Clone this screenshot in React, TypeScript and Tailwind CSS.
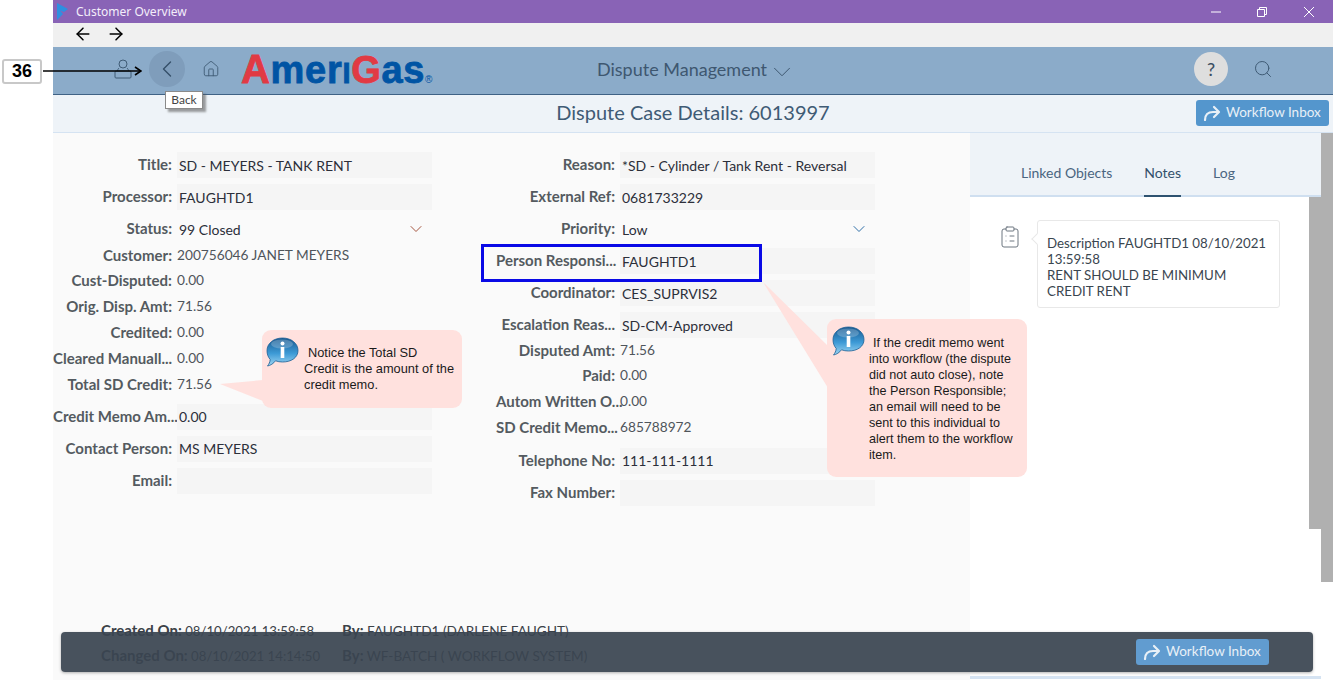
import React from "react";
import { ArrowLeft, ArrowRight, ChevronDown, ChevronLeft, House, Search, ClipboardList } from "lucide-react";

const font = "font-['Lato',sans-serif]";

function Info({ className }: { className: string }) {
  return (
    <svg viewBox="0 0 33 30" className={className}>
      <defs>
        <linearGradient id="ig" x1="0" y1="0" x2="0" y2="1">
          <stop offset="0" stopColor="#17588f" />
          <stop offset="0.55" stopColor="#3d9ad6" />
          <stop offset="1" stopColor="#9fd6f2" />
        </linearGradient>
      </defs>
      <path d="M16.5 1C25.5 1 32 6.5 32 13.5S25.5 25 16.5 25c-2.5 0-5-.4-7-1.2C7.5 26.5 4.5 28.5 1.500 29c1.500-1.800 2.500-4 2.700-6.500C2 20 1 17 1 13.500 1 6.500 7.500 1 16.500 1Z" fill="url(#ig)" stroke="#1d5f94" strokeWidth="0.8" />
      <ellipse cx="16" cy="7" rx="11" ry="4.500" fill="#fff" opacity="0.22" />
      <circle cx="16.500" cy="6.500" r="2" fill="#fff" />
      <rect x="14.700" y="10" width="3.600" height="11" fill="#fff" />
    </svg>
  );
}

function Flow() {
  return (
    <svg viewBox="0 0 18 16" className="h-4 w-[18px] shrink-0" fill="none" stroke="currentColor" strokeWidth="2.200" strokeLinecap="round" strokeLinejoin="round">
      <path d="M2 15c0-5 3-8 8-8h5" />
      <path d="M11 2l5 5-5 5" />
    </svg>
  );
}

function Button({ className }: { className: string }) {
  return (
    <div className={`flex h-[26px] w-[133px] items-center gap-[5px] whitespace-nowrap rounded-[3px] pl-[7px] text-[13.500px] text-[#e8f0f7] ${className}`}>
      <Flow />
      <span className="mb-[2px]">Workflow Inbox</span>
    </div>
  );
}

function Label({ text }: { text: string }) {
  return <span className="mb-[2px] w-[119px] shrink-0 whitespace-nowrap text-right text-[15px] font-bold text-[#545a60]">{text}</span>;
}

function FieldRow({ label, value, chevron, blue }: { label: string; value?: string; chevron?: boolean; blue?: boolean }) {
  return (
    <div className="flex h-8 items-center gap-[5px]">
      <Label text={label} />
      <div className={`flex h-[26px] w-[255px] items-center justify-between px-[2px] text-[14px] text-[#2c2f3a] ${chevron ? "bg-transparent" : "bg-[#f5f5f5]"}`}>
        <span className="whitespace-nowrap">{value}</span>
        {chevron && <ChevronDown className={`mr-1 h-5 w-5 ${blue ? "text-[#2f6fa8]" : "text-[#a5553f]"}`} strokeWidth={1.200} />}
      </div>
    </div>
  );
}

function TextRow({ label, value }: { label: string; value: string }) {
  return (
    <div className="flex h-[25.800px] items-center gap-[5px]">
      <Label text={label} />
      <span className="mb-[2px] text-[13.700px] text-[#4f555b]">{value}</span>
    </div>
  );
}

export default function App() {
  return (
    <div className={`relative flex h-[680px] w-[1333px] overflow-hidden bg-white ${font}`}>
      <div className="w-[53px] shrink-0" />
      <div className="flex min-w-0 flex-1 flex-col">
        <div className="flex h-[23px] items-center bg-[#8963b6] text-white">
          <svg viewBox="0 0 12 17" className="ml-[4px] h-[17px] w-3"><path d="M0 0l11 6-4 3-4-1.500 3 3.500-6 6Z" fill="#2f8fe0" /></svg>
          <span className="ml-[7px] font-['Noto_Sans',sans-serif] text-[12px] text-[#f3eefa]">Customer Overview</span>
          <div className="ml-auto flex items-center">
            <svg viewBox="0 0 10 10" className="mr-[36px] h-[10px] w-[10px]"><path d="M0 5h10" stroke="#fff" strokeWidth="1" /></svg>
            <svg viewBox="0 0 10 10" className="mr-[36px] h-[10px] w-[10px]" fill="none" stroke="#fff" strokeWidth="1"><path d="M0.500 2.500h7v7h-7zM2.500 2.500v-2h7v7h-2" /></svg>
            <svg viewBox="0 0 12 12" className="mr-[18px] h-3 w-3" fill="none" stroke="#fff" strokeWidth="1"><path d="M1 1l10 10M11 1L1 11" /></svg>
          </div>
        </div>
        <div className="flex h-6 items-center gap-[13px] bg-[#f0f0f0] pb-[2px] pl-5 text-black">
          <ArrowLeft className="h-5 w-5" strokeWidth={1.800} />
          <ArrowRight className="h-5 w-5" strokeWidth={1.800} />
        </div>
        <div className="relative flex h-[48px] items-center border-b border-[#3f6285] bg-[#8babc9] pb-[3px]">
          <div className="ml-[60px] flex w-[20px] justify-center">
            <svg viewBox="0 0 20 20" className="h-5 w-5" fill="none" stroke="#3f5b75" strokeWidth="1"><circle cx="10" cy="5" r="4" /><path d="M6 9c-1 1-1.500 2-1.500 3M14 9c1 1 1.500 2 1.500 3" /><rect x="2" y="12" width="16" height="7" rx="1" /></svg>
          </div>
          <div className="ml-[16px] flex h-9 w-9 items-center justify-center rounded-full bg-[#7f9dbb]">
            <ChevronLeft className="h-7 w-7 text-[#354f68]" strokeWidth={1.200} />
          </div>
          <House className="ml-[17px] h-[18px] w-[18px] text-[#3f5b75]" strokeWidth={1.200} />
          <div className="ml-[21px] flex w-[192px] items-baseline whitespace-nowrap font-['Liberation_Sans',sans-serif] font-bold tracking-[0.700px] text-[#0054a4] [-webkit-text-stroke-width:0.8px]">
            <span className="text-[40px] leading-none text-[#e13a44]">A</span>
            <span className="text-[38px] leading-none">mer</span>
            <span className="text-[29px] leading-none">I</span>
            <span className="text-[38px] leading-none text-[#e13a44]">G</span>
            <span className="text-[38px] leading-none">as</span>
            <span className="text-[10px] font-normal leading-none [-webkit-text-stroke-width:0px]">®</span>
          </div>
          <div className="absolute left-[544px] top-[7px] flex items-center text-[#3e5770]">
            <span className="mb-[2px] w-[170px] whitespace-nowrap text-[18px]">Dispute Management</span>
            <ChevronDown className="mt-[3px] h-[30px] w-[30px]" strokeWidth={0.800} />
          </div>
          <div className="ml-auto mr-[60px] flex items-center gap-[25px]">
            <div className="flex h-[34px] w-[34px] items-center justify-center rounded-full bg-[#dedede] text-[18px] font-medium text-[#3c4f62]">?</div>
            <Search className="h-5 w-5 text-[#3f5b75]" strokeWidth={1.200} />
          </div>
        </div>
        <div className="flex h-[38px] items-center justify-center border-b border-[#d5e3f2] bg-[#eef3f8]">
          <span className="mb-[3px] text-[20px] text-[#3f5b75]">Dispute Case Details: 6013997</span>
          <div className="absolute right-[4px] top-[100px]"><Button className="bg-[#5496cd]" /></div>
        </div>
        <div className="flex min-h-0 flex-1">
          <div className="flex w-[917px] shrink-0 flex-col bg-[#fafafa] pt-4">
            <div className="flex gap-[64px]">
              <div className="flex w-[379px] flex-col">
                <FieldRow label="Title:" value="SD - MEYERS - TANK RENT" />
                <FieldRow label="Processor:" value="FAUGHTD1" />
                <FieldRow label="Status:" value="99 Closed" chevron />
                <div className="mb-[3.200px] mt-[-2px] flex flex-col">
                  <TextRow label="Customer:" value="200756046 JANET MEYERS" />
                  <TextRow label="Cust-Disputed:" value="0.00" />
                  <TextRow label="Orig. Disp. Amt:" value="71.56" />
                  <TextRow label="Credited:" value="0.00" />
                  <TextRow label="Cleared Manuall..." value="0.00" />
                  <TextRow label="Total SD Credit:" value="71.56" />
                </div>
                <FieldRow label="Credit Memo Am..." value="0.00" />
                <FieldRow label="Contact Person:" value="MS MEYERS" />
                <FieldRow label="Email:" value="" />
              </div>
              <div className="flex w-[379px] flex-col">
                <FieldRow label="Reason:" value="*SD - Cylinder / Tank Rent - Reversal" />
                <FieldRow label="External Ref:" value="0681733229" />
                <FieldRow label="Priority:" value="Low" chevron blue />
                <FieldRow label="Person Responsi..." value="FAUGHTD1" />
                <FieldRow label="Coordinator:" value="CES_SUPRVIS2" />
                <FieldRow label="Escalation Reas..." value="SD-CM-Approved" />
                <div className="mb-[3.800px] mt-[-3px] flex flex-col">
                  <TextRow label="Disputed Amt:" value="71.56" />
                  <TextRow label="Paid:" value="0.00" />
                  <TextRow label="Autom Written O..." value="0.00" />
                  <TextRow label="SD Credit Memo..." value="685788972" />
                </div>
                <FieldRow label="Telephone No:" value="111-111-1111" />
                <FieldRow label="Fax Number:" value="" />
              </div>
            </div>
            <div className="mt-auto flex flex-col gap-[7px] pb-4 pl-[48px] text-[13.600px] text-[#3c4248]">
              <div className="flex h-[18px] items-center"><span className="w-[241px] text-[13.200px]"><b className="text-[15px] font-bold">Created On:</b> 08/10/2021 13:59:58</span><span><b className="text-[15px] font-bold">By:</b> FAUGHTD1 (DARLENE FAUGHT)</span></div>
              <div className="flex h-[18px] items-center"><span className="w-[241px] text-[13.200px]"><b className="text-[15px] font-bold">Changed On:</b> 08/10/2021 14:14:50</span><span><b className="text-[15px] font-bold">By:</b> WF-BATCH ( WORKFLOW SYSTEM)</span></div>
            </div>
          </div>
          <div className="flex min-w-0 flex-1 flex-col">
            <div className="flex h-[64px] shrink-0">
              <div className="flex w-[351px] items-end gap-8 border-b-2 border-[#cfdff0] bg-[#eef3f8] pl-[51px] text-[14px] text-[#4a6580]">
                <span className="pb-[12px]">Linked Objects</span>
                <span className="relative pb-[12px] text-[#33506b]">Notes<span className="absolute bottom-[-2px] left-0 h-[2px] w-full bg-[#2e5270]" /></span>
                <span className="pb-[12px]">Log</span>
              </div>
              <div className="w-3 bg-[#b0b0b0]" />
            </div>
            <div className="flex min-h-0 flex-1">
              <div className="flex min-w-0 flex-1 items-start pl-[28px] pt-[24px]">
                <ClipboardList className="mt-[3px] h-[26px] w-[24px] text-[#6d7680]" strokeWidth={1} />
                <div className="relative ml-[15px] mt-[-1px] w-[243px] rounded-[3px] border border-[#e8e8e8] pb-[8px] pl-[9px] pt-[14px] text-[13.300px] leading-4 text-[#3a4650]">
                  <span className="absolute left-[-5px] top-[14px] h-2 w-2 rotate-45 border-b border-l border-[#e8e8e8] bg-white" />
                  Description FAUGHTD1 08/10/2021<br />13:59:58<br />RENT SHOULD BE MINIMUM<br />CREDIT RENT
                </div>
              </div>
              <div className="flex w-6 shrink-0 flex-col">
                <div className="h-[332px] bg-[#b0b0b0]" />
                <div className="ml-3 h-[53px] w-3 bg-[#b0b0b0]" />
              </div>
            </div>
            <div className="mb-[1px] h-[3px] w-[351px] bg-[#d5e3f2]" />
          </div>
        </div>
      </div>

      <div className="absolute left-[61px] top-[632px] flex h-[40px] w-[1252px] items-center justify-end rounded-[4px] bg-[#3a4551]/[0.93] pr-[44px] shadow-[0_1px_3px_rgba(0,0,0,0.3)]">
        <Button className="bg-[#619cd0]" />
      </div>

      <div className="absolute left-[2px] top-[59px] flex h-[25px] w-[40px] items-center justify-center rounded-[3px] border-2 border-[#c8c8c8] bg-white font-['Liberation_Sans',sans-serif] text-[18px] font-bold text-black">36</div>
      <svg className="absolute left-[42px] top-[64px] h-[14px] w-[100px]" viewBox="0 0 100 14" fill="none" stroke="#000"><path d="M1 7h98" strokeWidth="1.600" /><path d="M93 3l6 4-6 4" strokeWidth="1.600" /></svg>

      <div className="absolute left-[165px] top-[91px] flex h-[18px] w-[38px] items-center justify-center border border-[#8a8a8a] bg-white text-[12px] text-[#444] shadow-[3px_3px_2px_rgba(80,80,80,0.55)]">Back</div>

      <div className="absolute left-[481px] top-[244px] h-[38px] w-[281px] border-[3px] border-[#0a0ae6]" />

      <svg className="absolute left-[220px] top-[378px] h-[26px] w-[43px]" viewBox="0 0 43 26"><path d="M0 6L43 2V23Z" fill="#ffe1de" /></svg>
      <div className="absolute left-[262px] top-[330px] h-[78px] w-[200px] rounded-[9px] bg-[#ffe1de] pl-[42px] pt-[15px] font-['Liberation_Sans',sans-serif] text-[12.800px] leading-4 text-[#1a1a1a]">
        <Info className="absolute left-[4px] top-[7px] h-[30px] w-[33px]" />
        <span className="ml-1">Notice the Total SD</span><br />Credit is the amount of the<br />credit memo.
      </div>

      <svg className="absolute left-[763px] top-[281px] h-[110px] w-[66px]" viewBox="0 0 66 110"><path d="M0 1L65 65V107Z" fill="#ffe1de" /></svg>
      <div className="absolute left-[827px] top-[319px] h-[158px] w-[200px] rounded-[9px] bg-[#ffe1de] pl-[42px] pt-[16px] font-['Liberation_Sans',sans-serif] text-[12.600px] leading-4 text-[#1a1a1a]">
        <Info className="absolute left-[5px] top-[7px] h-[30px] w-[33px]" />
        <span className="ml-1">If the credit memo went</span><br />into workflow (the dispute<br />did not auto close), note<br />the Person Responsible;<br />an email will need to be<br />sent to this individual to<br />alert them to the workflow<br />item.
      </div>
    </div>
  );
}
